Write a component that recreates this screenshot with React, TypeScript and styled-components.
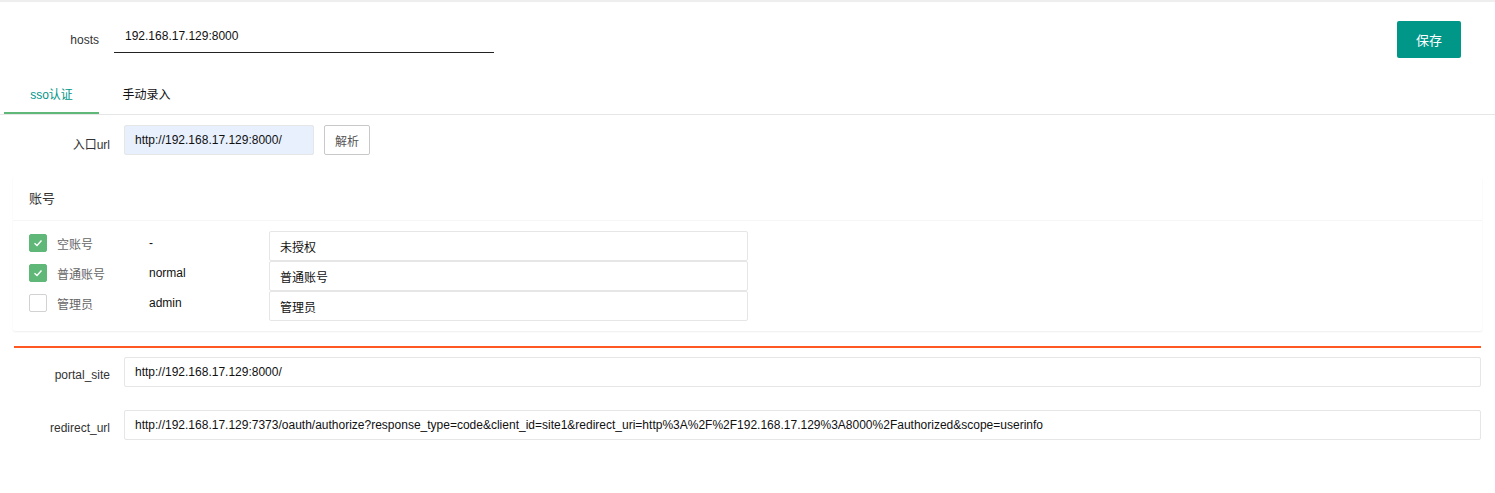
import styled, { createGlobalStyle } from 'styled-components';

const GlobalStyle = createGlobalStyle`
  html, body {
    margin: 0;
    padding: 0;
    background: #fff;
  }
  body {
    font-family: "Liberation Sans", Arial, "Noto Sans CJK SC", sans-serif;
    font-size: 12px;
    color: #333;
  }
`;

const accounts = [
  { name: '空账号', user: '-', role: '未授权', checked: true },
  { name: '普通账号', user: 'normal', role: '普通账号', checked: true },
  { name: '管理员', user: 'admin', role: '管理员', checked: false }
];

const App = (): JSX.Element => {
  return (
    <>
      <GlobalStyle />
      <Page>
        <TopRow>
          <HostsLabel>hosts</HostsLabel>
          <LineInput defaultValue="192.168.17.129:8000" />
          <Spacer />
          <SaveButton>保存</SaveButton>
        </TopRow>

        <TabBar>
          <Tab $active>sso认证</Tab>
          <Tab>手动录入</Tab>
        </TabBar>

        <FormRow $top={10}>
          <Label>入口url</Label>
          <AutoInput defaultValue="http://192.168.17.129:8000/" />
          <PlainButton>解析</PlainButton>
        </FormRow>

        <Card>
          <CardHeader>账号</CardHeader>
          <CardBody>
            {accounts.map((a) => (
              <AccountRow key={a.name}>
                <CheckBox $checked={a.checked}>
                  {a.checked && (
                    <svg width="12" height="12" viewBox="0 0 12 12">
                      <path d="M2.5 6.2 L5 8.5 L9.5 3.5" fill="none" stroke="#fff" strokeWidth="1.4" />
                    </svg>
                  )}
                </CheckBox>
                <AccountName>{a.name}</AccountName>
                <AccountUser>{a.user}</AccountUser>
                <RoleInput defaultValue={a.role} />
              </AccountRow>
            ))}
          </CardBody>
        </Card>

        <OrangeLine />

        <FormRow $top={9}>
          <Label>portal_site</Label>
          <BoxInput defaultValue="http://192.168.17.129:8000/" />
        </FormRow>
        <FormRow $top={23}>
          <Label>redirect_url</Label>
          <BoxInput defaultValue="http://192.168.17.129:7373/oauth/authorize?response_type=code&client_id=site1&redirect_uri=http%3A%2F%2F192.168.17.129%3A8000%2Fauthorized&scope=userinfo" />
        </FormRow>
      </Page>
    </>
  );
};

export default App;

const Page = styled.div`
  width: 1495px;
  min-height: 493px;
  border-top: 2px solid #eee;
  box-sizing: border-box;
`;

const TopRow = styled.div`
  display: flex;
  align-items: center;
  padding: 19px 34px 0 0;
  height: 37px;
`;

const HostsLabel = styled.label`
  width: 114px;
  padding-right: 15px;
  box-sizing: border-box;
  text-align: right;
  font-size: 12px;
  color: #333;
  padding-top: 1px;
`;

const LineInput = styled.input`
  width: 380px;
  height: 30px;
  border: none;
  border-bottom: 1px solid #222;
  outline: none;
  padding: 0 0 3px 11px;
  box-sizing: border-box;
  font: inherit;
  font-size: 12px;
  color: #111;
  margin-top: -4px;
`;

const Spacer = styled.div`
  flex: 1;
`;

const SaveButton = styled.button`
  width: 64px;
  height: 37px;
  background: #009688;
  color: #fff;
  border: none;
  border-radius: 2px;
  font-family: "Liberation Sans", "Noto Sans CJK SC", sans-serif;
  font-size: 13px;
  cursor: pointer;
`;

const TabBar = styled.div`
  display: flex;
  margin-top: 17px;
  height: 39px;
  border-bottom: 1px solid #e6e6e6;
  padding-left: 4px;
`;

const Tab = styled.div<{ $active?: boolean }>`
  width: 95px;
  height: 39px;
  line-height: 40px;
  text-align: center;
  font-size: 12px;
  box-sizing: border-box;
  color: ${(p) => (p.$active ? '#009688' : '#111')};
  border-bottom: 2px solid ${(p) => (p.$active ? '#5fb878' : 'transparent')};
  margin-bottom: -1px;
`;

const FormRow = styled.div<{ $top: number }>`
  display: flex;
  align-items: center;
  margin-top: ${(p) => p.$top}px;
  padding-right: 14px;
`;

const Label = styled.label`
  width: 124px;
  padding-right: 14px;
  box-sizing: border-box;
  text-align: right;
  font-size: 12px;
  color: #333;
  flex-shrink: 0;
  padding-top: 6px;
`;

const AutoInput = styled.input`
  width: 190px;
  height: 30px;
  box-sizing: border-box;
  border: 1px solid #e6e6e6;
  border-radius: 2px;
  background: #e8f0fe;
  padding: 0 10px;
  font: inherit;
  font-size: 12px;
  color: #111;
  outline: none;
`;

const PlainButton = styled.button`
  margin-left: 10px;
  width: 46px;
  height: 30px;
  border: 1px solid #c9c9c9;
  border-radius: 2px;
  background: #fff;
  color: #555;
  font-family: "Liberation Sans", "Noto Sans CJK SC", sans-serif;
  font-size: 12px;
`;

const Card = styled.div`
  margin: 22px 13px 0 13px;
  background: #fff;
  border-radius: 2px;
  box-shadow: 0 1px 2px 0 rgba(0, 0, 0, 0.07);
`;

const CardHeader = styled.div`
  height: 42px;
  line-height: 42px;
  padding-left: 16px;
  padding-top: 1px;
  font-size: 13px;
  color: #333;
  border-bottom: 1px solid #f6f6f6;
`;

const CardBody = styled.div`
  padding: 10px 0 10px 16px;
`;

const AccountRow = styled.div`
  display: flex;
  align-items: center;
  height: 30px;
`;

const CheckBox = styled.span<{ $checked: boolean }>`
  width: 18px;
  height: 18px;
  box-sizing: border-box;
  border-radius: 2px;
  display: flex;
  align-items: center;
  justify-content: center;
  background: ${(p) => (p.$checked ? '#5fb878' : '#fff')};
  border: 1px solid ${(p) => (p.$checked ? '#5fb878' : '#d2d2d2')};
  margin-top: -6px;
`;

const AccountName = styled.span`
  width: 102px;
  padding-left: 10px;
  box-sizing: border-box;
  font-size: 12px;
  color: #666;
  margin-top: -5px;
`;

const AccountUser = styled.span`
  width: 120px;
  font-size: 12px;
  color: #111;
  margin-top: -7px;
`;

const RoleInput = styled.input`
  width: 479px;
  height: 30px;
  box-sizing: border-box;
  border: 1px solid #e6e6e6;
  border-radius: 2px;
  padding: 0 10px;
  font: inherit;
  font-size: 12px;
  color: #111;
  outline: none;
`;

const OrangeLine = styled.div`
  margin: 15px 14px 0 14px;
  height: 2px;
  background-color: rgb(255, 87, 34);
`;

const BoxInput = styled.input`
  flex: 1;
  height: 30px;
  box-sizing: border-box;
  border: 1px solid #e6e6e6;
  border-radius: 2px;
  padding: 0 10px;
  font: inherit;
  font-size: 12px;
  color: #111;
  outline: none;
`;
